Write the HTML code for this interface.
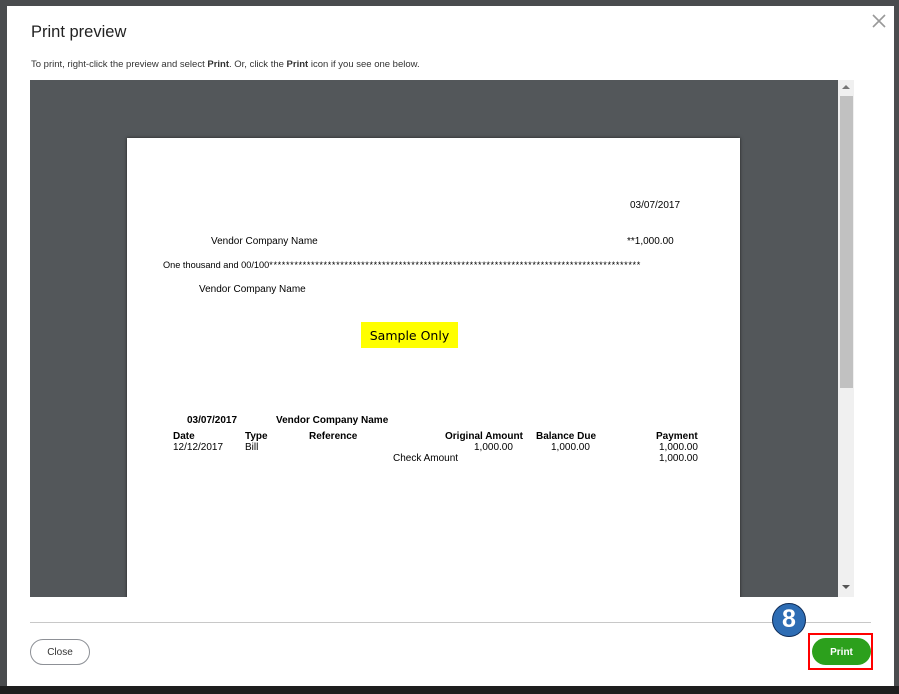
<!DOCTYPE html>
<html><head><style>
body{margin:0;width:899px;height:694px;background:#4a4c4e;position:relative;overflow:hidden;font-family:"Liberation Sans",sans-serif}
.a{position:absolute}
.p{font-size:10px;color:#000;white-space:nowrap}
.b{font-weight:bold}
</style></head><body>
<div class="a" style="left:0;top:686px;width:899px;height:8px;background:#1e1e1e"></div>
<div class="a" style="left:7px;top:6px;width:887px;height:680px;background:#fff"></div>
<div class="a" style="left:31px;top:23px;font-size:16.5px;color:#222">Print preview</div>
<div class="a" style="left:31px;top:59px;font-size:9.5px;color:#333">To print, right-click the preview and select <b>Print</b>. Or, click the <b>Print</b> icon if you see one below.</div>
<svg class="a" style="left:872px;top:14px" width="14" height="14"><path d="M1 1L13 13M13 1L1 13" stroke="#999" stroke-width="1.6"/></svg>
<div class="a" style="left:30px;top:80px;width:808px;height:517px;background:#53575a;overflow:hidden">
  <div class="a" style="left:97px;top:58px;width:613px;height:470px;background:#fff;box-shadow:0 0 3px #222">
    <div class="a p" style="left:503px;top:62px">03/07/2017</div>
    <div class="a p" style="left:84px;top:98px">Vendor Company Name</div>
    <div class="a p" style="left:500px;top:98px">**1,000.00</div>
    <div class="a p" style="left:36px;top:122px;font-size:9.2px">One thousand and 00/100<span style="letter-spacing:0.6px">*****************************************************************************************</span></div>
    <div class="a p" style="left:72px;top:146px">Vendor Company Name</div>
    <div class="a" style="left:234px;top:184px;width:97px;height:26px;background:#ffff00;font-size:12.5px;line-height:28px;text-align:center;font-family:'DejaVu Sans',sans-serif">Sample Only</div>
    <div class="a p b" style="left:60px;top:277px">03/07/2017</div>
    <div class="a p b" style="left:149px;top:277px">Vendor Company Name</div>
    <div class="a p b" style="left:46px;top:293px">Date</div>
    <div class="a p b" style="left:118px;top:293px">Type</div>
    <div class="a p b" style="left:182px;top:293px">Reference</div>
    <div class="a p b" style="left:318px;top:293px">Original Amount</div>
    <div class="a p b" style="left:409px;top:293px">Balance Due</div>
    <div class="a p b" style="left:529px;top:293px">Payment</div>
    <div class="a p" style="left:46px;top:304px">12/12/2017</div>
    <div class="a p" style="left:118px;top:304px">Bill</div>
    <div class="a p" style="left:347px;top:304px">1,000.00</div>
    <div class="a p" style="left:424px;top:304px">1,000.00</div>
    <div class="a p" style="left:532px;top:304px">1,000.00</div>
    <div class="a p" style="left:266px;top:315px">Check Amount</div>
    <div class="a p" style="left:532px;top:315px">1,000.00</div>
  </div>
</div>
<div class="a" style="left:838px;top:80px;width:16px;height:517px;background:#f0f0f0"></div>
<div class="a" style="left:840px;top:96px;width:13px;height:292px;background:#c1c1c1"></div>
<div class="a" style="left:842px;top:85px;width:0;height:0;border:4px solid transparent;border-bottom:4px solid #777;border-top:0"></div>
<div class="a" style="left:842px;top:585px;width:0;height:0;border:4px solid transparent;border-top:4px solid #555;border-bottom:0"></div>
<div class="a" style="left:30px;top:622px;width:841px;height:1px;background:#c8c8c8"></div>
<div class="a" style="left:30px;top:639px;width:58px;height:24px;border:1px solid #8d9096;border-radius:13px;font-size:10px;line-height:26px;text-align:center;color:#333">Close</div>
<div class="a" style="left:772px;top:603px;width:34px;height:34px;border-radius:50%;background:#2e6db4;border:1.5px solid #0d2a55;box-sizing:border-box;color:#fff;font-weight:bold;font-size:25px;line-height:31px;text-align:center">8</div>
<div class="a" style="left:808px;top:633px;width:61px;height:33px;border:2px solid #f00"></div>
<div class="a" style="left:812px;top:638px;width:59px;height:27px;border-radius:14px;background:#2ca01c;color:#fff;font-weight:bold;font-size:10px;line-height:29px;text-align:center">Print</div>
</body></html>
